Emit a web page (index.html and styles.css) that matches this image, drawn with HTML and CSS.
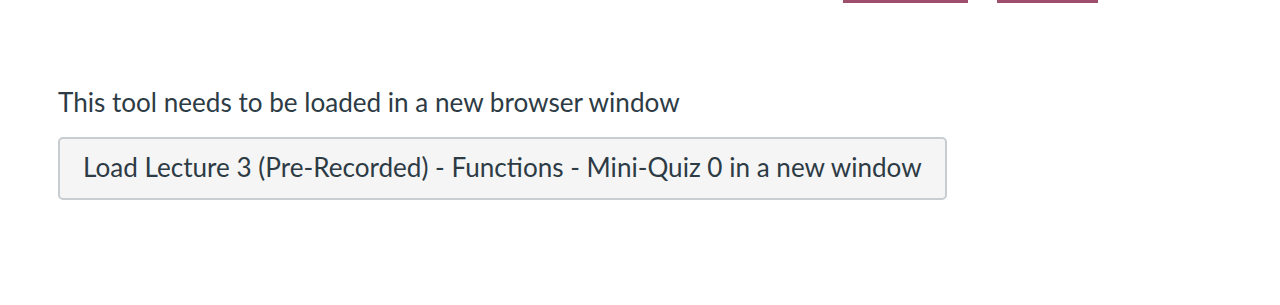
FILE: index.html
```html
<!DOCTYPE html>
<html>
<head>
<meta charset="utf-8">
<link rel="stylesheet" href="styles.css">
</head>
<body>
<div class="tabs">
  <span class="tab tab-a"></span>
  <span class="tab tab-b"></span>
</div>
<div class="content">
  <p class="notice">This tool needs to be loaded in a new browser window</p>
  <button class="load-btn">Load Lecture 3 (Pre-Recorded) - Functions - Mini-Quiz 0 in a new window</button>
</div>
</body>
</html>
```
FILE: styles.css
```css
html, body {
  margin: 0;
  padding: 0;
  background: #ffffff;
}
body {
  width: 1280px;
  height: 305px;
  overflow: hidden;
  font-family: Lato, "Liberation Sans", sans-serif;
  color: #2d3b45;
}
.tabs {
  display: flex;
  height: 3px;
  padding-left: 843px;
  gap: 29px;
}
.tab {
  display: block;
  height: 3px;
  background: #9e4f6b;
}
.tab-a { width: 125px; }
.tab-b { width: 101px; }
.content {
  padding: 81px 0 0 58px;
}
.notice {
  margin: 0;
  font-size: 26.1px;
  line-height: 36px;
}
.load-btn {
  margin-top: 17px;
  display: inline-block;
  height: 63px;
  padding: 0 23px 3px;
  background: #f5f5f5;
  border: 2px solid #c7cdd1;
  border-radius: 5px;
  font-family: Lato, "Liberation Sans", sans-serif;
  font-size: 26.1px;
  color: #2d3b45;
}
```
